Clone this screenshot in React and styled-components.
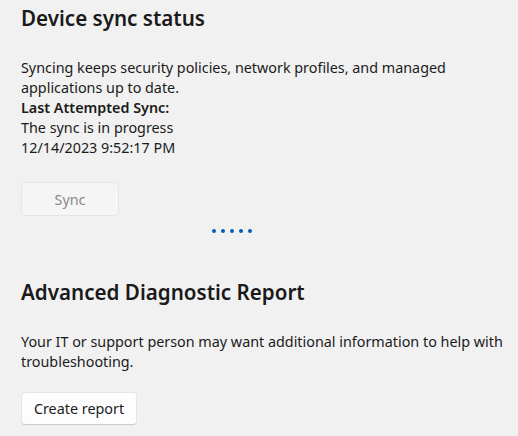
import React from "react";
import styled, { createGlobalStyle } from "styled-components";

const Global = createGlobalStyle`
  html, body { margin: 0; padding: 0; background: #f1f1f1; }
  body { font-family: "Noto Sans", "Open Sans", sans-serif; color: #1b1b1b; }
`;

const Page = styled.div`
  width: 518px;
  height: 436px;
  box-sizing: border-box;
  padding: 0 10px 0 21px;
  display: flex;
  flex-direction: column;
`;

const Title = styled.h2`
  margin: ${(p) => p.$top}px 0 0 0;
  font-size: 20.6px;
  line-height: 28px;
  font-weight: 600;
  color: #1a1a1a;
`;

const Text = styled.div`
  font-size: 14.35px;
  line-height: 20px;
  font-weight: ${(p) => (p.$bold ? 600 : 400)};
  margin-top: ${(p) => p.$top || 0}px;
`;

const Button = styled.button`
  box-sizing: border-box;
  width: ${(p) => p.$w}px;
  height: ${(p) => p.$h}px;
  margin-top: ${(p) => p.$top}px;
  font-family: inherit;
  font-size: 14.35px;
  border-radius: 4px;
  border: 1px solid #e5e5e5;
  border-bottom-color: ${(p) => (p.disabled ? "#e5e5e5" : "#cccccc")};
  background: ${(p) => (p.disabled ? "#f5f5f5" : "#fdfdfd")};
  color: ${(p) => (p.disabled ? "#8a8a8a" : "#1b1b1b")};
  padding: 0;
`;

const Dots = styled.div`
  display: flex;
  gap: 5px;
  margin: 13px 0 0 191px;
`;

const Dot = styled.span`
  width: 4px;
  height: 4px;
  border-radius: 50%;
  background: #005fb8;
`;

export default function App() {
  return (
    <>
      <Global />
      <Page>
        <Title $top={4}>Device sync status</Title>
        <Text $top={26}>
          Syncing keeps security policies, network profiles, and managed
          applications up to date.
        </Text>
        <Text $bold>Last Attempted Sync:</Text>
        <Text>The sync is in progress</Text>
        <Text>12/14/2023 9:52:17 PM</Text>
        <Button disabled $w={98} $h={34} $top={24}>Sync</Button>
        <Dots>
          {[0, 1, 2, 3, 4].map((i) => (
            <Dot key={i} />
          ))}
        </Dots>
        <Title $top={45}>Advanced Diagnostic Report</Title>
        <Text $top={26}>
          Your IT or support person may want additional information to help with
          troubleshooting.
        </Text>
        <Button $w={116} $h={33} $top={20}>Create report</Button>
      </Page>
    </>
  );
}
